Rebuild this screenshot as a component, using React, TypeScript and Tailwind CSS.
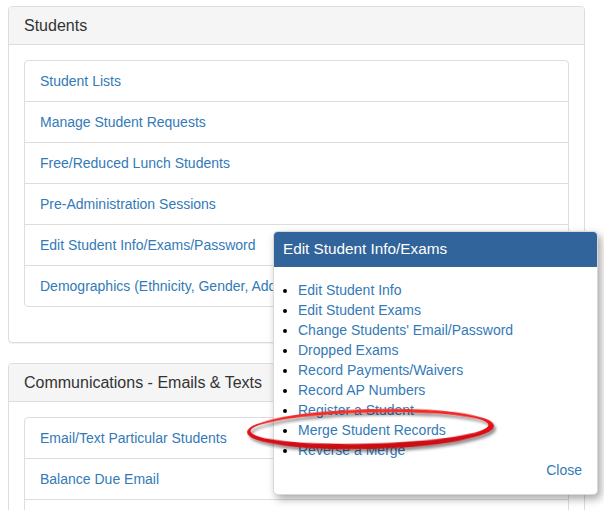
import React from "react";

const studentLinks = [
  "Student Lists",
  "Manage Student Requests",
  "Free/Reduced Lunch Students",
  "Pre-Administration Sessions",
  "Edit Student Info/Exams/Password",
  "Demographics (Ethnicity, Gender, Address, School)",
];

const commLinks = ["Email/Text Particular Students", "Balance Due Email", "\u00a0"];

const popupLinks = [
  "Edit Student Info",
  "Edit Student Exams",
  "Change Students' Email/Password",
  "Dropped Exams",
  "Record Payments/Waivers",
  "Record AP Numbers",
  "Register a Student",
  "Merge Student Records",
  "Reverse a Merge",
];

function Panel({ title, links }: { title: string; links: string[] }) {
  return (
    <div className="w-[577px] mb-[20px] border border-[#dddddd] rounded-[4px] bg-white shadow-[0_1px_1px_rgba(0,0,0,0.05)]">
      <div className="px-[15px] py-[10px] bg-[#f5f5f5] border-b border-[#dddddd] rounded-t-[3px] text-[16px] leading-[17px] text-[#333333]">
        {title}
      </div>
      <div className="p-[15px]">
        <ul className="mb-[20px] border border-[#dddddd] rounded-[4px] divide-y divide-[#dddddd]">
          {links.map((l, i) => (
            <li key={i} className="px-[15px] py-[10px] leading-5 text-[14px] text-[#337ab7] whitespace-nowrap overflow-hidden">
              {l}
            </li>
          ))}
        </ul>
      </div>
    </div>
  );
}

export default function App() {
  return (
    <div className="relative w-[604px] h-[510px] overflow-hidden bg-white font-['Liberation_Sans',Arial,sans-serif]">
      <div className="pt-[6px] pl-[8px]">
        <Panel title="Students" links={studentLinks} />
        <Panel title="Communications - Emails & Texts" links={commLinks} />
      </div>

      <div className="absolute left-[273px] top-[231px] w-[325px] bg-white rounded-[5px] overflow-hidden border border-[rgba(0,0,0,0.15)] shadow-[3px_4px_8px_rgba(0,0,0,0.35)]">
        <div className="h-[35px] flex items-center pl-[9px] bg-[#31649a] text-white text-[15.3px]">
          Edit Student Info/Exams
        </div>
        <div className="pt-[13px] pb-[14px]">
          <ul className="list-disc pl-[24px] text-[14px] leading-5 text-black">
            {popupLinks.map((l) => (
              <li key={l}>
                <span className="text-[#337ab7]">{l}</span>
              </li>
            ))}
          </ul>
          <div className="text-right pr-[15px] text-[14px] leading-5 text-[#337ab7]">Close</div>
        </div>
      </div>

      <svg className="absolute left-0 top-0 pointer-events-none" width="604" height="510" viewBox="0 0 604 510">
        <defs>
          <filter id="sh" x="-10%" y="-50%" width="120%" height="200%">
            <feDropShadow dx="2" dy="3" stdDeviation="1.8" floodColor="#000" floodOpacity="0.45" />
          </filter>
          <linearGradient id="rg" x1="0" y1="0" x2="0" y2="1">
            <stop offset="0" stopColor="#f5332b" />
            <stop offset="0.5" stopColor="#e3101a" />
            <stop offset="1" stopColor="#c80a10" />
          </linearGradient>
        </defs>
        <g transform="rotate(-1.5 370.5 429)" filter="url(#sh)">
          <path
            fillRule="evenodd"
            fill="url(#rg)"
            d="M247 429 a123.5 20 0 1 0 247 0 a123.5 20 0 1 0 -247 0 Z M250.5 428 a119 15.5 0 1 0 238 0 a119 15.5 0 1 0 -238 0 Z"
          />
        </g>
      </svg>
    </div>
  );
}
